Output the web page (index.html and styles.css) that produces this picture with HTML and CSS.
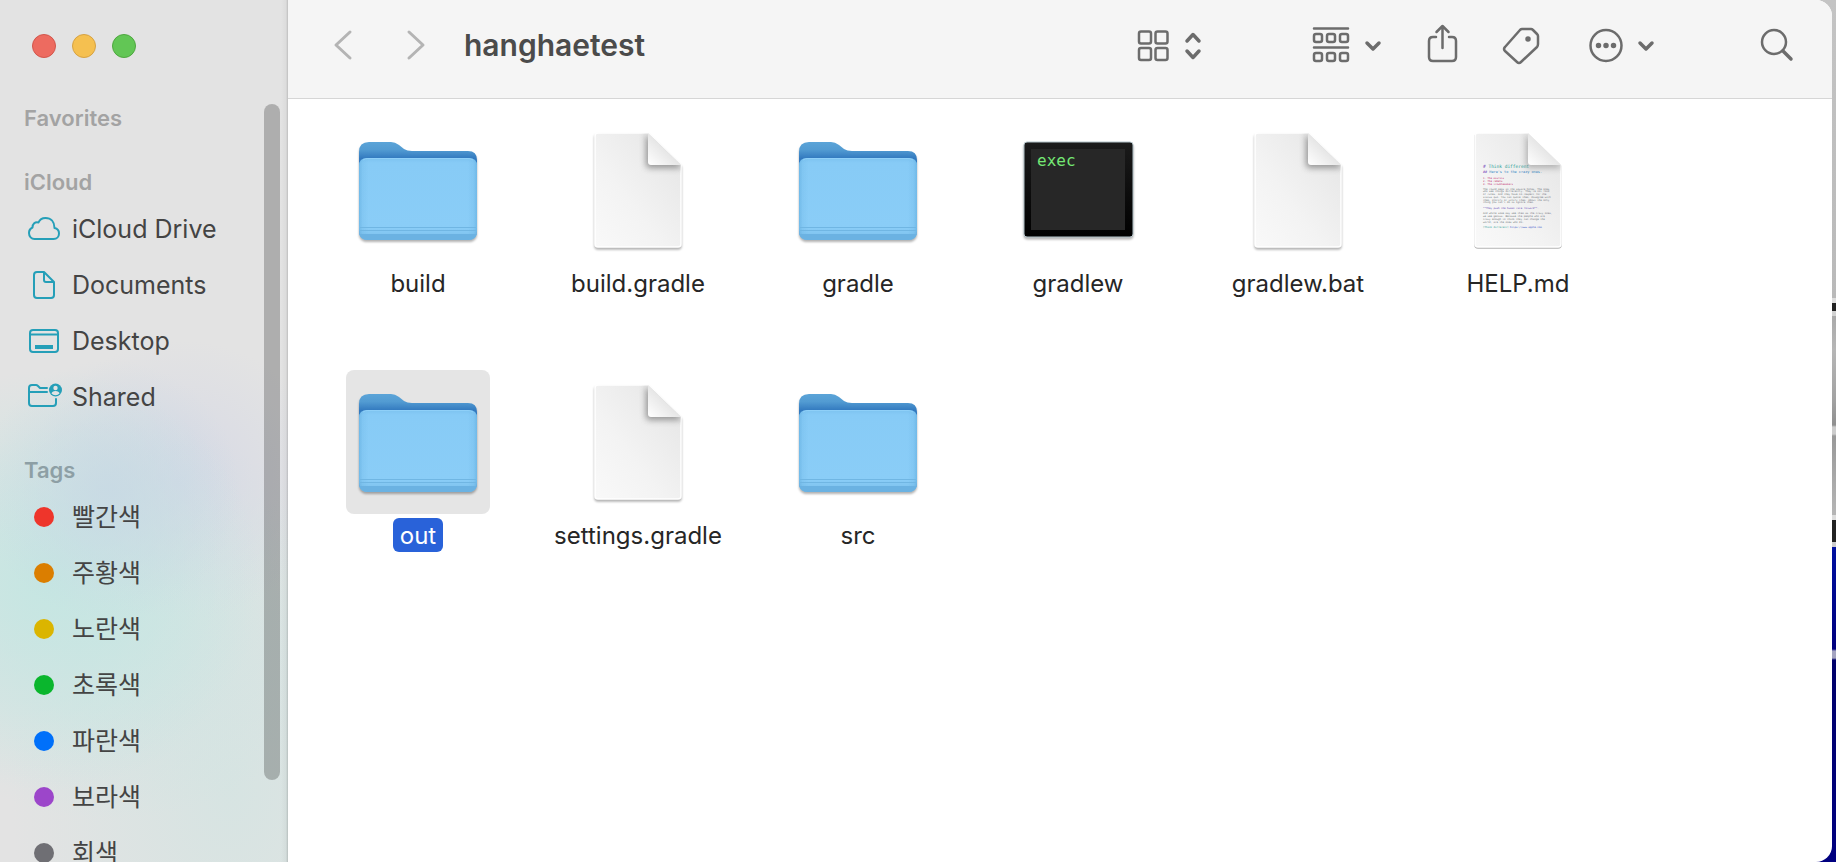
FILE: index.html
```html
<!DOCTYPE html>
<html lang="en">
<head>
    <meta charset="UTF-8">
    <meta name="viewport" content="width=device-width, initial-scale=1.0">
    <title>hanghaetest</title>
    <link rel="stylesheet" href="styles.css">
</head>
<body>
    <!-- shared drawings -->
    <svg class="defs" width="0" height="0" aria-hidden="true">
        <defs>
            <linearGradient id="folderBack" x1="0" y1="0" x2="0" y2="1">
                <stop offset="0" stop-color="#5ba4d8"/>
                <stop offset="0.08" stop-color="#529bd2"/>
                <stop offset="0.17" stop-color="#3279bf"/>
                <stop offset="1" stop-color="#3279bf"/>
            </linearGradient>
            <linearGradient id="folderFront" x1="0" y1="0" x2="0" y2="1">
                <stop offset="0" stop-color="#7dc3f0"/>
                <stop offset="0.06" stop-color="#87cbf6"/>
                <stop offset="0.85" stop-color="#8acdf7"/>
                <stop offset="1" stop-color="#79bdea"/>
            </linearGradient>
            <linearGradient id="folderSide">
                <stop offset="0" stop-color="#4d9dd2" stop-opacity="0.4"/>
                <stop offset="0.03" stop-color="#4d9dd2" stop-opacity="0.12"/>
                <stop offset="0.08" stop-color="#4d9dd2" stop-opacity="0"/>
                <stop offset="0.92" stop-color="#4d9dd2" stop-opacity="0"/>
                <stop offset="0.97" stop-color="#4d9dd2" stop-opacity="0.12"/>
                <stop offset="1" stop-color="#4d9dd2" stop-opacity="0.4"/>
            </linearGradient>
            <linearGradient id="paper" x1="1" y1="0" x2="0" y2="1">
                <stop offset="0" stop-color="#e4e4e4"/>
                <stop offset="0.6" stop-color="#f3f3f3"/>
                <stop offset="1" stop-color="#f9f9f9"/>
            </linearGradient>
            <linearGradient id="fold" x1="0" y1="1" x2="0.5" y2="0.5">
                <stop offset="0" stop-color="#ffffff"/>
                <stop offset="1" stop-color="#e6e6e6"/>
            </linearGradient>
            <linearGradient id="bezel" x1="0" y1="0" x2="0" y2="1">
                <stop offset="0" stop-color="#1b1b1b"/>
                <stop offset="1" stop-color="#000000"/>
            </linearGradient>
            <filter id="soft" x="-50%" y="-50%" width="200%" height="200%">
                <feGaussianBlur stdDeviation="6"/>
            </filter>
            <clipPath id="pageShape">
                <path d="M64 30H164L230 94V252Q230 258 224 258H64Q58 258 58 252V36Q58 30 64 30Z"/>
            </clipPath>
        </defs>
        <symbol id="folder" viewBox="0 0 144 144">
            <path d="M13 34Q13 24 23 24H45Q49 24 53 27L58 31Q61 33 66 33H122Q131 33 131 42V112Q131 121 122 121H22Q13 121 13 112Z" fill="url(#folderBack)"/>
            <path d="M13 48Q13 40 21 40H123Q131 40 131 48V113Q131 122 122 122H22Q13 122 13 113Z" fill="url(#folderFront)"/>
            <path d="M13 48Q13 40 21 40H123Q131 40 131 48V113Q131 122 122 122H22Q13 122 13 113Z" fill="url(#folderSide)"/>
            <path d="M14 109.500H130M14 112.500H130" stroke="#70b6e3" stroke-width="1"/>
            <path d="M13 116H131Q129 122 122 122H22Q15 122 13 116Z" fill="#6bb2e2"/>
            <path d="M17 42Q19 40.500 22 40.500H122Q125 40.500 127 42" fill="none" stroke="#8fd0f8" stroke-width="1"/>
        </symbol>
        <symbol id="document" viewBox="0 0 288 288">
            <path d="M64 30H164L230 94V252Q230 258 224 258H64Q58 258 58 252V36Q58 30 64 30Z" fill="url(#paper)" stroke="#ffffff" stroke-width="3"/>
            <g clip-path="url(#pageShape)">
                <path d="M160 32V92Q160 100 168 100H232L228 92Z" fill="#777777" opacity="0.75" filter="url(#soft)"/>
            </g>
            <path d="M164 30L230 94H170Q164 94 164 88Z" fill="url(#fold)"/>
        </symbol>
    </svg>

    <div class="window">
        <aside class="sidebar">
            <div class="window-controls">
                <button class="light close" aria-label="Close"></button>
                <button class="light minimize" aria-label="Minimize"></button>
                <button class="light zoom" aria-label="Zoom"></button>
            </div>

            <nav class="sections">
                <section>
                    <h2>Favorites</h2>
                </section>
                <section>
                    <h2>iCloud</h2>
                    <a class="row" href="#drive">
                        <svg class="row-icon" viewBox="0 0 36 32"><path d="M8.500 26H27.500C31 26 33 23.500 33 20.500C33 17.500 31 15.500 28.500 15C28.500 9 25 5 19.500 5C16 5 13.500 7 12.500 9.500C9 8.500 6.500 11 6.500 14.500C4.500 15.500 3 17.500 3 20C3 23.500 5.500 26 8.500 26Z" fill="none"/></svg>
                        iCloud Drive
                    </a>
                    <a class="row" href="#documents">
                        <svg class="row-icon" viewBox="0 0 36 32"><path d="M11 3H18L28 13V26Q28 29 25 29H11Q8 29 8 26V6Q8 3 11 3ZM18 3V11Q18 13 20 13H28" fill="none"/></svg>
                        Documents
                    </a>
                    <a class="row" href="#desktop">
                        <svg class="row-icon" viewBox="0 0 36 32"><rect x="4" y="5" width="28" height="22" rx="3" fill="none"/><path d="M4 9.500H32" fill="none"/><rect x="9" y="20" width="18" height="4" class="solid"/></svg>
                        Desktop
                    </a>
                    <a class="row" href="#shared">
                        <svg class="row-icon" viewBox="0 0 36 32"><path d="M21 7H14L12 5Q11 4 10 4H6Q3 4 3 7V22Q3 25 6 25H27Q30 25 30 22V18M3 11H21" fill="none"/><circle cx="29.500" cy="9" r="6.500" class="solid"/><circle cx="29.500" cy="7" r="2.200" class="person"/><path d="M25.500 12.500Q26 10 29.500 10T33.500 12.500Q32 14.200 29.500 14.200T25.500 12.500Z" class="person"/></svg>
                        Shared
                    </a>
                </section>
                <section lang="ko">
                    <h2 class="tinted">Tags</h2>
                    <a class="row tag" href="#red"><span class="dot red"></span>빨간색</a>
                    <a class="row tag" href="#orange"><span class="dot orange"></span>주황색</a>
                    <a class="row tag" href="#yellow"><span class="dot yellow"></span>노란색</a>
                    <a class="row tag" href="#green"><span class="dot green"></span>초록색</a>
                    <a class="row tag" href="#blue"><span class="dot blue"></span>파란색</a>
                    <a class="row tag" href="#purple"><span class="dot purple"></span>보라색</a>
                    <a class="row tag" href="#gray"><span class="dot gray"></span>회색</a>
                </section>
            </nav>
            <div class="scrollbar"></div>
        </aside>

        <main class="content">
            <header class="toolbar">
                <div class="history">
                    <button class="tool faded" aria-label="Back"><svg width="40" height="40" viewBox="0 0 40 40"><path d="M27 7L13 20L27 33"/></svg></button>
                    <button class="tool faded" aria-label="Forward"><svg width="40" height="40" viewBox="0 0 40 40"><path d="M13 7L27 20L13 33"/></svg></button>
                </div>
                <h1>hanghaetest</h1>
                <div class="tools">
                    <button class="tool view" aria-label="View as icons">
                        <svg width="68" height="40" viewBox="0 0 68 40"><rect x="3" y="6.500" width="12" height="12" rx="2"/><rect x="19.500" y="6.500" width="12" height="12" rx="2"/><rect x="3" y="23" width="12" height="12" rx="2"/><rect x="19.500" y="23" width="12" height="12" rx="2"/><path class="bold" d="M51 16L57 9.500L63 16M51 26L57 32.500L63 26"/></svg>
                    </button>
                    <button class="tool" aria-label="Group items">
                        <svg width="72" height="40" viewBox="0 0 72 40"><path d="M3 3.500H37M3 22.500H37"/><rect x="3" y="9" width="8" height="8" rx="2"/><rect x="16" y="9" width="8" height="8" rx="2"/><rect x="29" y="9" width="8" height="8" rx="2"/><rect x="3" y="28" width="8" height="8" rx="2"/><rect x="16" y="28" width="8" height="8" rx="2"/><rect x="29" y="28" width="8" height="8" rx="2"/><path class="bold" d="M56 18L62 24L68 18"/></svg>
                    </button>
                    <button class="tool" aria-label="Share">
                        <svg width="40" height="40" viewBox="0 0 40 40"><path d="M14 12H11Q7 12 7 16V32Q7 36 11 36H30Q34 36 34 32V16Q34 12 30 12H27M20.500 23V1.500M14.500 7L20.500 1L26.500 7"/></svg>
                    </button>
                    <button class="tool" aria-label="Edit tags">
                        <svg width="40" height="40" viewBox="0 0 40 40"><path d="M21 4H30Q31 4 32 5L36 9Q37 10 37 11V19Q37 21 36 22L20 37Q18 39 16 37L4 26Q2 24 4 22L19 5Q20 4 21 4Z"/><circle cx="27" cy="14" r="1.500" class="dark"/></svg>
                    </button>
                    <button class="tool more" aria-label="More actions">
                        <svg width="72" height="40" viewBox="0 0 72 40"><circle cx="20" cy="20.500" r="15.500"/><circle cx="12.500" cy="20.500" r="1.500" class="dark"/><circle cx="20" cy="20.500" r="1.500" class="dark"/><circle cx="27.500" cy="20.500" r="1.500" class="dark"/><path class="bold" d="M54 18L60 24L66 18"/></svg>
                    </button>
                    <button class="tool search" aria-label="Search">
                        <svg width="40" height="40" viewBox="0 0 40 40"><circle cx="17" cy="17" r="12"/><path class="bold" d="M26 26L34 34"/></svg>
                    </button>
                </div>
            </header>

            <ul class="files">
                <li><button class="file"><svg class="icon"><use href="#folder"/></svg><span class="name">build</span></button></li>
                <li><button class="file"><svg class="icon"><use href="#document"/></svg><span class="name">build.gradle</span></button></li>
                <li><button class="file"><svg class="icon"><use href="#folder"/></svg><span class="name">gradle</span></button></li>
                <li><button class="file">
                    <svg class="icon" viewBox="0 0 144 144">
                        <rect x="18" y="24" width="109" height="95" rx="3" fill="url(#bezel)" stroke="#b4c4ca" stroke-width="1"/>
                        <rect x="25" y="31" width="94" height="81" fill="#272727" class="flat"/>
                        <text class="exec" x="31" y="48">exec</text>
                    </svg>
                    <span class="name">gradlew</span>
                </button></li>
                <li><button class="file"><svg class="icon"><use href="#document"/></svg><span class="name">gradlew.bat</span></button></li>
                <li><button class="file">
                    <svg class="icon preview" viewBox="0 0 288 288">
                        <path d="M64 30H164L230 94V252Q230 258 224 258H64Q58 258 58 252V36Q58 30 64 30Z" fill="url(#paper)" stroke="#ffffff" stroke-width="3"/>
                        <text class="big" x="74" y="99"><tspan fill="#7040b8">#</tspan> Think different</text>
                        <text class="mid" x="74" y="110"><tspan fill="#7040b8">##</tspan> Here's to the crazy ones.</text>
                        <g fill="#c02868">
                            <text x="74" y="121">1. The misfits</text>
                            <text x="74" y="127">2. The rebels</text>
                            <text x="74" y="133">3. The troublemakers</text>
                        </g>
                        <g fill="#6d7478">
                            <text x="74" y="143">The round pegs in the square holes. The ones</text>
                            <text x="74" y="148">who see things differently. They're not fond</text>
                            <text x="74" y="154">of rules. And they have no respect for the</text>
                            <text x="74" y="159">status quo. You can quote them, disagree with</text>
                            <text x="74" y="165">them, glorify or vilify them. About the only</text>
                            <text x="74" y="170">thing you can't do is ignore them.</text>
                        </g>
                        <text x="74" y="181" fill="#6046b4">**They push the human race forward**.</text>
                        <g fill="#6d7478">
                            <text x="74" y="192">And while some may see them as the crazy ones,</text>
                            <text x="74" y="198">we see genius. Because the people who are</text>
                            <text x="74" y="203">crazy enough to think they can change the</text>
                            <text x="74" y="209">world, are the ones who do.</text>
                        </g>
                        <text x="74" y="219" fill="#289c94">[Think different] <tspan fill="#3050c8">https://www.apple.com</tspan></text>
                        <g clip-path="url(#pageShape)">
                            <path d="M160 32V92Q160 100 168 100H232L228 92Z" fill="#777777" opacity="0.5" filter="url(#soft)"/>
                        </g>
                        <path d="M164 30L230 94H170Q164 94 164 88Z" fill="url(#fold)" class="flat"/>
                    </svg>
                    <span class="name">HELP.md</span>
                </button></li>
                <li><button class="file selected"><svg class="icon"><use href="#folder"/></svg><span class="name">out</span></button></li>
                <li><button class="file"><svg class="icon"><use href="#document"/></svg><span class="name">settings.gradle</span></button></li>
                <li><button class="file"><svg class="icon"><use href="#folder"/></svg><span class="name">src</span></button></li>
            </ul>
        </main>
    </div>
</body>
</html>
```
FILE: styles.css
```css
* {
    box-sizing: border-box;
}

/* strip of desktop behind the window */
body {
    margin: 0;
    height: 100vh;
    padding-right: 4px;
    overflow: hidden;
    font-family: Inter, "Noto Sans CJK KR", sans-serif;
    background: linear-gradient(#c4c4c4 0, #b9b9b9 298px, #dddddd 298px, #dddddd 303px, #222222 303px, #222222 311px, #d2d2d2 311px, #d2d2d2 316px, #aaaaaa 316px, #b6b6b6 350px, #a2a2a2 400px, #8f8f8f 425px, #cccccc 427px, #cccccc 434px, #999999 436px, #b5b5b5 515px, #dddddd 515px, #dddddd 520px, #222222 520px, #222222 542px, #cccccc 542px, #cccccc 547px, #0010a0 547px, #00007e 649px, #a4a4c0 651px, #a4a4c0 658px, #00006a 660px, #000080 100%);
}

.defs {
    position: absolute;
}

button {
    padding: 0;
    border: none;
    background: none;
    font: inherit;
    color: inherit;
}

.window {
    display: flex;
    height: 100%;
    background-color: white;
    border-radius: 0 16px 16px 0;
    overflow: hidden;
}

/* sidebar */
.sidebar {
    position: relative;
    flex: none;
    width: 288px;
    overflow: hidden;
    background:
        linear-gradient(to left, rgba(0, 0, 0, 0.16), rgba(0, 0, 0, 0.03) 2px, rgba(0, 0, 0, 0) 7px),
        radial-gradient(ellipse 130px 130px at 110px 490px, rgba(199, 216, 228, 0.8), rgba(199, 216, 228, 0)),
        radial-gradient(ellipse 210px 210px at 50px 580px, rgba(197, 230, 226, 1), rgba(197, 230, 226, 0)),
        radial-gradient(ellipse 150px 140px at 180px 480px, rgba(209, 213, 230, 0.7), rgba(209, 213, 230, 0)),
        radial-gradient(ellipse 240px 200px at 110px 620px, rgba(203, 229, 227, 0.8), rgba(203, 229, 227, 0)),
        radial-gradient(ellipse 220px 300px at 230px 790px, rgba(213, 228, 226, 0.9), rgba(213, 228, 226, 0)),
        #e3e3e3;
}

.window-controls {
    display: flex;
    gap: 16px;
    height: 99px;
    padding: 34px 32px;
}

.light {
    width: 24px;
    height: 24px;
    border-radius: 50%;
    border: 1px solid;
}

.light.close {
    background-color: #ed6b60;
    border-color: #d2564c;
}

.light.minimize {
    background-color: #f5c050;
    border-color: #d6a243;
}

.light.zoom {
    background-color: #62c655;
    border-color: #4ea73f;
}

.sections {
    display: flex;
    flex-direction: column;
    gap: 26px;
}

h2 {
    margin: 0;
    padding-left: 24px;
    font-size: 22px;
    font-weight: 600;
    line-height: 38px;
    color: #a3a3a3;
}

h2.tinted {
    color: #8d9fa5;
}

.row {
    display: flex;
    align-items: center;
    gap: 10px;
    height: 56px;
    padding-left: 26px;
    font-size: 25px;
    color: #444444;
    text-decoration: none;
}

.row.tag {
    gap: 18px;
    padding-left: 34px;
    line-height: 28px;
}

.row-icon {
    width: 36px;
    height: 32px;
    stroke: #259fb8;
    stroke-width: 2;
    stroke-linejoin: round;
    stroke-linecap: round;
}

.row-icon .solid {
    fill: #259fb8;
    stroke: none;
}

.row-icon .person {
    fill: #e3e3e3;
    stroke: none;
}

.dot {
    width: 20px;
    height: 20px;
    border-radius: 50%;
}

.red { background-color: #ee352b; }
.orange { background-color: #db7e00; }
.yellow { background-color: #dbb500; }
.green { background-color: #0ab62d; }
.blue { background-color: #0070fa; }
.purple { background-color: #9c46ca; }
.gray { background-color: #6f6f74; }

.scrollbar {
    position: absolute;
    top: 104px;
    right: 8px;
    bottom: 82px;
    width: 16px;
    border-radius: 8px;
    background-color: rgba(0, 0, 0, 0.23);
}

/* toolbar */
.content {
    flex: 1;
    min-width: 0;
}

.toolbar {
    display: flex;
    align-items: center;
    height: 99px;
    padding: 0 35px 8px;
    background-color: #f5f5f5;
    border-bottom: 1px solid #d6d6d6;
}

.history {
    display: flex;
    gap: 33px;
}

h1 {
    margin: 0 0 0 28px;
    font-size: 30px;
    font-weight: 600;
    color: #4b4b4b;
}

.tools {
    display: flex;
    gap: 39px;
    margin-left: auto;
}

.tool svg {
    display: block;
    fill: none;
    stroke: #6c6c6c;
    stroke-width: 2.5;
    stroke-linecap: round;
    stroke-linejoin: round;
    overflow: visible;
}

.tool svg .bold {
    stroke-width: 3.5;
}

.tool svg .dark {
    fill: #6c6c6c;
}

.tool.faded svg {
    stroke: #b4b4b4;
    stroke-width: 3;
}

.tool.view {
    margin-right: 68px;
}

.tool.more {
    margin-left: 6px;
}

.tool.search {
    margin-left: 60px;
}

/* file grid */
.files {
    display: grid;
    grid-template-columns: repeat(auto-fill, 220px);
    row-gap: 70px;
    margin: 0;
    padding: 19px 20px;
    list-style: none;
}

.file {
    display: flex;
    flex-direction: column;
    align-items: center;
    gap: 4px;
    width: 100%;
}

.icon {
    width: 144px;
    height: 144px;
    border-radius: 8px;
}

.icon > * {
    filter: drop-shadow(0 2px 1px rgba(0, 0, 0, 0.3));
}

.icon text,
.icon g,
.icon .flat {
    filter: none;
}

.name {
    height: 34px;
    padding: 0 7px;
    border-radius: 6px;
    font-size: 24px;
    line-height: 36px;
    color: #262626;
    white-space: nowrap;
}

.selected .icon {
    background-color: #e5e5e5;
}

.selected .name {
    background-color: #2962d9;
    color: white;
}

.exec {
    font-family: "DejaVu Sans Mono", monospace;
    font-size: 16px;
    fill: #74e774;
}

.preview text {
    font-family: "DejaVu Sans Mono", monospace;
    font-size: 5px;
}

.preview .mid {
    font-size: 7px;
    fill: #3484c4;
}

.preview .big {
    font-size: 9px;
    fill: #289c94;
}
```
